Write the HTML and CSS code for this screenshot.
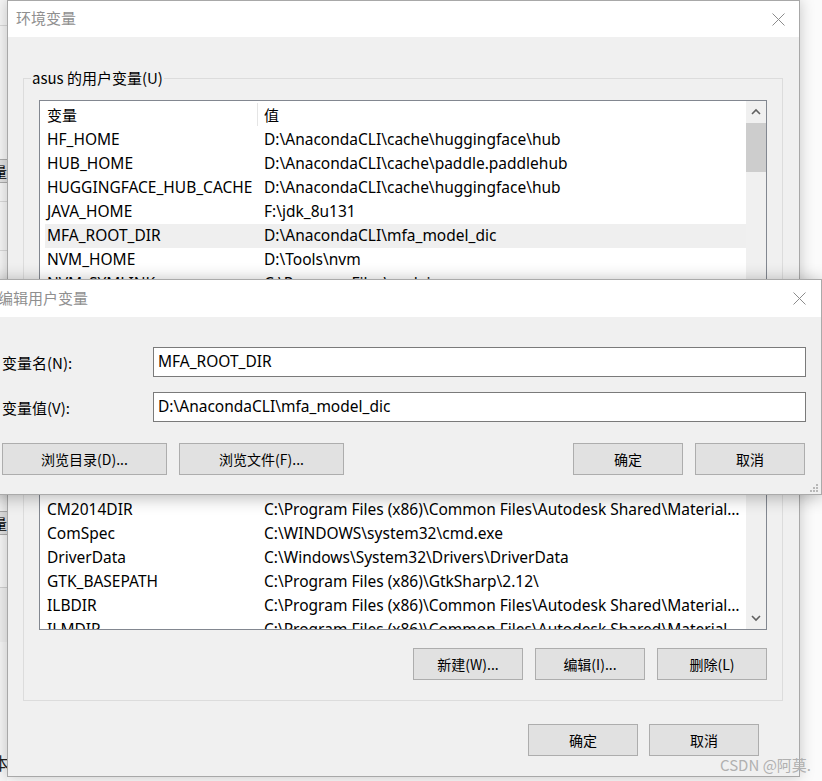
FILE: index.html
```html
<!DOCTYPE html>
<html>

<head>
  <meta charset="UTF-8">
  <title>环境变量</title>
  <link rel="stylesheet" href="styles.css">
</head>

<body>
  <div class="desk">
    <div class="behind">
      <div class="behind-line top"></div>
      <div class="behind-btn">量</div>
      <div class="behind-line"></div>
      <div class="behind-line mid"></div>
      <div class="behind-btn low">量</div>
      <div class="behind-shade"></div>
      <div class="behind-char">本</div>
    </div>

    <div class="win">
      <div class="titlebar">
        <span class="title">环境变量</span>
        <svg class="close" width="13" height="13" viewBox="0 0 13 13">
          <path d="M0.5 0.5L12.5 12.5M12.5 0.5L0.5 12.5" stroke="#8c8c8c" stroke-width="1" fill="none" />
        </svg>
      </div>

      <div class="win-body">
        <fieldset class="group">
          <legend>asus 的用户变量(U)</legend>

          <div class="list">
            <div class="list-main">
              <div class="list-head">
                <div class="hcell name">变量</div>
                <div class="hcell value">值</div>
              </div>
              <div class="row"><div class="cell">HF_HOME</div><div class="cell">D:\AnacondaCLI\cache\huggingface\hub</div></div>
              <div class="row"><div class="cell">HUB_HOME</div><div class="cell">D:\AnacondaCLI\cache\paddle.paddlehub</div></div>
              <div class="row"><div class="cell">HUGGINGFACE_HUB_CACHE</div><div class="cell">D:\AnacondaCLI\cache\huggingface\hub</div></div>
              <div class="row"><div class="cell">JAVA_HOME</div><div class="cell">F:\jdk_8u131</div></div>
              <div class="row selected"><div class="cell">MFA_ROOT_DIR</div><div class="cell">D:\AnacondaCLI\mfa_model_dic</div></div>
              <div class="row"><div class="cell">NVM_HOME</div><div class="cell">D:\Tools\nvm</div></div>
              <div class="row"><div class="cell">NVM_SYMLINK</div><div class="cell">C:\Program Files\nodejs</div></div>
              <!-- rows hidden behind the edit dialog -->
              <div class="list-gap"></div>
              <div class="row"><div class="cell">CLASSPATH</div><div class="cell">.;%JAVA_HOME%\lib\dt.jar;%JAVA_HOME%\lib\tools.jar</div></div>
              <div class="row"><div class="cell">CM2014DIR</div><div class="cell">C:\Program Files (x86)\Common Files\Autodesk Shared\Materials\2014</div></div>
              <div class="row"><div class="cell">ComSpec</div><div class="cell">C:\WINDOWS\system32\cmd.exe</div></div>
              <div class="row"><div class="cell">DriverData</div><div class="cell">C:\Windows\System32\Drivers\DriverData</div></div>
              <div class="row"><div class="cell">GTK_BASEPATH</div><div class="cell">C:\Program Files (x86)\GtkSharp\2.12\</div></div>
              <div class="row"><div class="cell">ILBDIR</div><div class="cell">C:\Program Files (x86)\Common Files\Autodesk Shared\Materials\2015</div></div>
              <div class="row"><div class="cell">ILMDIR</div><div class="cell">C:\Program Files (x86)\Common Files\Autodesk Shared\Materials\2016</div></div>
            </div>

            <div class="scrollbar">
              <div class="arrow">
                <svg width="10" height="7" viewBox="0 0 10 7"><polyline points="1,6 5,2 9,6" fill="none" stroke="#606060" stroke-width="1.6" /></svg>
              </div>
              <div class="track"><div class="thumb"></div></div>
              <div class="arrow">
                <svg width="10" height="7" viewBox="0 0 10 7"><polyline points="1,1 5,5 9,1" fill="none" stroke="#606060" stroke-width="1.6" /></svg>
              </div>
            </div>
          </div>

          <div class="btn-row">
            <button class="btn">新建(W)...</button>
            <button class="btn">编辑(I)...</button>
            <button class="btn">删除(L)</button>
          </div>
        </fieldset>

        <div class="btn-row footer">
          <button class="btn">确定</button>
          <button class="btn">取消</button>
        </div>
      </div>
    </div>
  </div>

  <!-- edit dialog on top of the main window -->
  <div class="dlg">
    <div class="titlebar dlg-title">
      <span class="title">编辑用户变量</span>
      <svg class="close" width="13" height="13" viewBox="0 0 13 13">
        <path d="M0.5 0.5L12.5 12.5M12.5 0.5L0.5 12.5" stroke="#8c8c8c" stroke-width="1" fill="none" />
      </svg>
    </div>
    <div class="dlg-body">
      <div class="field">
        <label>变量名(N):</label>
        <div class="input">MFA_ROOT_DIR</div>
      </div>
      <div class="field second">
        <label>变量值(V):</label>
        <div class="input">D:\AnacondaCLI\mfa_model_dic</div>
      </div>
      <div class="dlg-buttons">
        <button class="btn wide">浏览目录(D)...</button>
        <button class="btn wide">浏览文件(F)...</button>
        <span class="spacer"></span>
        <button class="btn">确定</button>
        <button class="btn">取消</button>
      </div>
    </div>
    <svg class="grip" width="8" height="8" viewBox="0 0 8 8">
      <rect x="6" y="0" width="2" height="2" fill="#b8b8b8" />
      <rect x="3" y="3" width="2" height="2" fill="#b8b8b8" />
      <rect x="6" y="3" width="2" height="2" fill="#b8b8b8" />
      <rect x="0" y="6" width="2" height="2" fill="#b8b8b8" />
      <rect x="3" y="6" width="2" height="2" fill="#b8b8b8" />
      <rect x="6" y="6" width="2" height="2" fill="#b8b8b8" />
    </svg>
  </div>

  <div class="watermark">CSDN @阿莫.</div>
</body>

</html>
```

FILE: styles.css
```css
* {
  box-sizing: border-box;
}

body {
  margin: 0;
  width: 822px;
  height: 781px;
  overflow: hidden;
  position: relative;
  background: #fbfbfb;
  font-family: "Noto Sans CJK SC", "Noto Sans", sans-serif;
  color: #000;
}

.desk {
  display: flex;
  align-items: flex-start;
}

/* window peeking out behind, on the left edge */
.behind {
  width: 7px;
  height: 781px;
  background: #f6f6f6;
  overflow: hidden;
  display: flex;
  flex-direction: column;
}

.behind-line {
  height: 1px;
  background: #d9d9d9;
  margin-top: 18px;
}

.behind-line.top {
  margin-top: 25px;
}

.behind-line.mid {
  margin-top: 48px;
}

.behind-btn {
  margin-top: 133px;
  height: 24px;
  background: #e1e1e1;
  border-top: 1px solid #adadad;
  border-bottom: 1px solid #adadad;
  font-size: 14px;
  line-height: 22px;
  text-indent: -7px;
  white-space: nowrap;
}

.behind-btn.low {
  margin-top: 260px;
}

.behind-shade {
  margin-top: 52px;
  height: 55px;
  border-top: 1px solid #d0d0d0;
  background: #efefef;
}

.behind-char {
  margin-top: 111px;
  font-size: 17px;
  line-height: 20px;
  text-indent: -8px;
  color: #222;
}

/* main window */
.win {
  width: 793px;
  height: 777px;
  border: 1px solid #a8a8a8;
  background: #f0f0f0;
  box-shadow: 0 0 14px rgba(0, 0, 0, 0.22);
}

.titlebar {
  height: 36px;
  background: #fff;
  display: flex;
  align-items: center;
  justify-content: space-between;
  padding: 0 14px 3px 8px;
}

.titlebar .close {
  margin-top: 3px;
}

.title {
  font-size: 15px;
  color: #8f8f8f;
}

.win-body {
  padding: 31px 16px 0 15px;
}

.group {
  margin: 0;
  min-width: 0;
  border: 1px solid #dcdcdc;
  padding: 12px 15px 20px;
}

.group legend {
  margin-left: -8px;
  padding: 0 1px;
  font-size: 15px;
  line-height: 20px;
}

.list {
  height: 530px;
  border: 1px solid #828790;
  background: #fff;
  display: flex;
}

.list-main {
  flex: 1;
  min-width: 0;
  overflow: hidden;
}

.list-head {
  height: 27px;
  display: flex;
  margin-left: 5px;
  font-size: 15px;
}

.hcell {
  line-height: 27px;
  padding-left: 2px;
}

.hcell.name {
  width: 213px;
  height: 23px;
  margin-top: 2px;
  line-height: 23px;
  border-right: 1px solid #e5e5e5;
}

.hcell.value {
  padding-left: 6px;
}

.row {
  height: 24px;
  margin-left: 5px;
  display: flex;
  font-family: "Noto Sans", "Noto Sans CJK SC", sans-serif;
  font-size: 15.5px;
  line-height: 23px;
  white-space: nowrap;
}

.row.selected {
  background: #efefef;
}

.cell {
  padding-left: 2px;
  overflow: hidden;
  text-overflow: ellipsis;
}

.cell:first-child {
  width: 217px;
  flex: none;
}

.cell:last-child {
  flex: 1;
  min-width: 0;
  padding-right: 6px;
}

.list-gap {
  height: 178px;
}

.scrollbar {
  width: 20px;
  flex: none;
  background: #f0f0f0;
  display: flex;
  flex-direction: column;
}

.arrow {
  height: 21px;
  display: flex;
  align-items: center;
  justify-content: center;
}

.track {
  flex: 1;
  padding-top: 1px;
}

.thumb {
  height: 49px;
  background: #cdcdcd;
}

.btn-row {
  display: flex;
  justify-content: flex-end;
  gap: 12px;
  margin-top: 18px;
}

.btn-row.footer {
  margin-top: 23px;
  margin-right: 24px;
  gap: 11px;
}

.btn {
  width: 110px;
  height: 32px;
  background: #e1e1e1;
  border: 1px solid #adadad;
  font-family: "Noto Sans CJK SC", sans-serif;
  font-size: 14px;
  color: #000;
  padding: 0;
}

.btn.wide {
  width: 165px;
}

/* edit dialog */
.dlg {
  position: absolute;
  left: -10px;
  top: 279px;
  width: 832px;
  height: 216px;
  border: 1px solid #aaa;
  background: #f0f0f0;
  box-shadow: 0 2px 16px rgba(0, 0, 0, 0.3);
}

.dlg-title {
  height: 37px;
  padding: 0 15px 3px 7px;
}

.dlg-body {
  padding: 30px 15px 0 11px;
}

.field {
  display: flex;
  align-items: center;
}

.field.second {
  margin-top: 15px;
}

.field label {
  width: 151px;
  font-size: 15px;
}

.input {
  flex: 1;
  height: 30px;
  border: 1px solid #7a7a7a;
  background: #fff;
  padding-left: 4px;
  font-family: "Noto Sans", sans-serif;
  font-size: 15.5px;
  line-height: 27px;
}

.dlg-buttons {
  display: flex;
  gap: 12px;
  margin-top: 21px;
  padding-right: 1px;
}

.spacer {
  flex: 1;
}

.grip {
  position: absolute;
  right: 3px;
  bottom: 2px;
}

.watermark {
  position: absolute;
  right: 11px;
  bottom: 6px;
  font-size: 15px;
  color: #b0b0b0;
}
```
